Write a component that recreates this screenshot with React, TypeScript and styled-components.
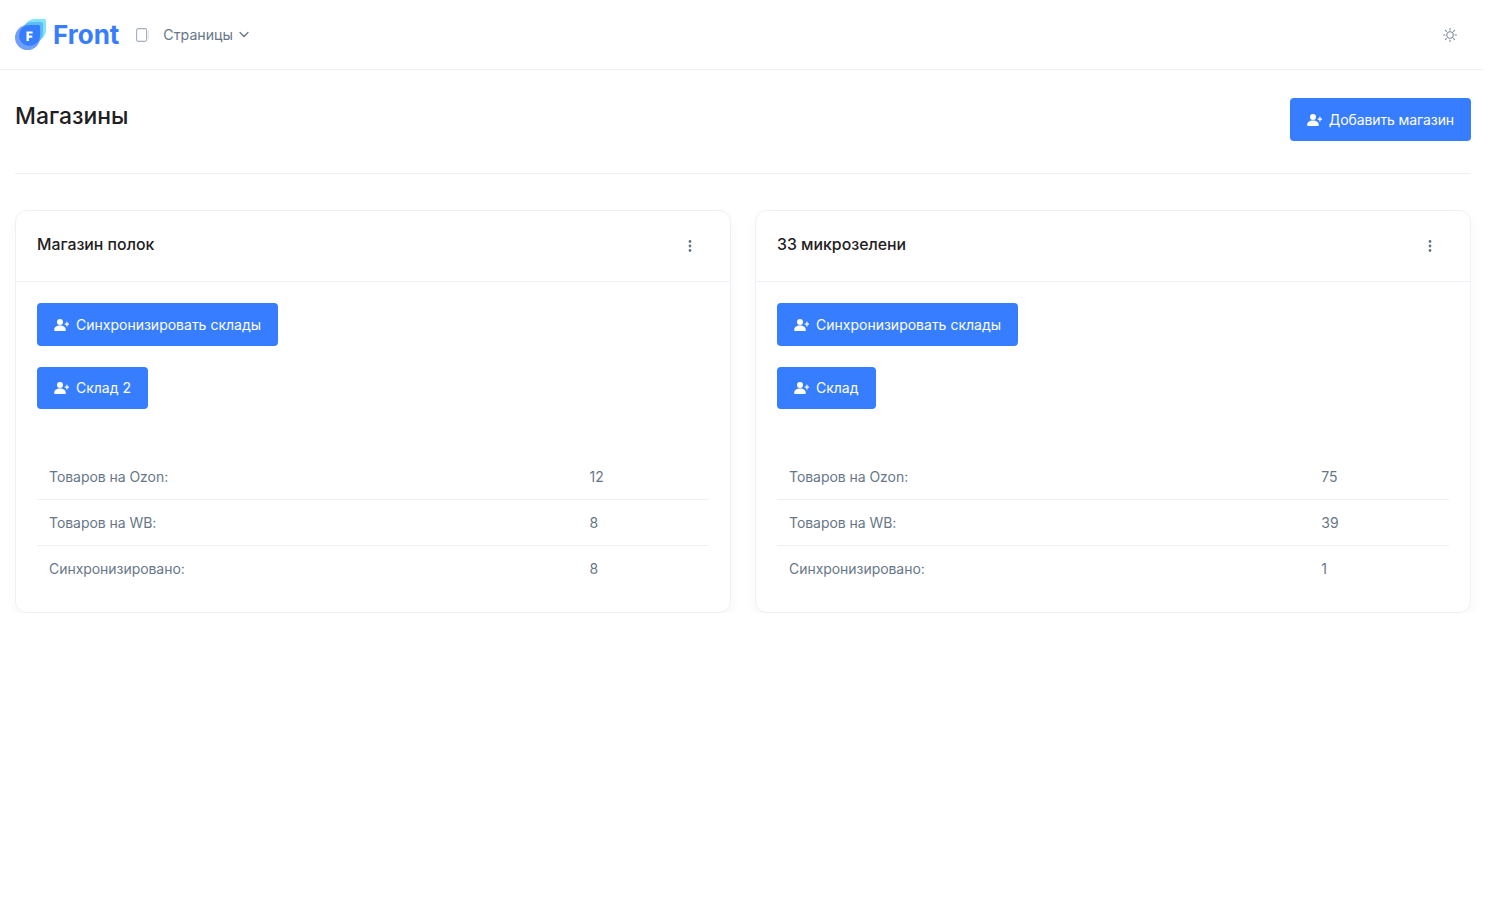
import React from "react";
import styled, { createGlobalStyle } from "styled-components";

const Global = createGlobalStyle`
  html, body { margin: 0; padding: 0; background: #fff; }
  body { font-family: Inter, "Liberation Sans", sans-serif; font-size: 14px; color: #677788; }
  * { box-sizing: border-box; }
`;

const Page = styled.div`
  width: 1483px;
`;
const Header = styled.header`
  height: 70px;
  border-bottom: 1px solid #eef0f5;
  display: flex;
  align-items: center;
  padding: 0 15px;
`;
const Brand = styled.a`
  display: flex;
  align-items: center;
  gap: 6px;
  color: #377dff;
  font-size: 26px;
  font-weight: 700;
`;
const NavIcon = styled.span`
  display: flex;
  margin-left: 17px;
  color: #a5aebd;
`;
const NavLink = styled.a`
  display: flex;
  align-items: center;
  gap: 6px;
  margin-left: 14px;
  font-size: 14.2px;
  color: #677788;
`;
const ThemeButton = styled.span`
  display: flex;
  margin-left: auto;
  margin-right: 11px;
  color: #7f8a9c;
`;
const Main = styled.main`
  padding: 28px 12px 0 15px;
`;
const TitleRow = styled.div`
  display: flex;
  justify-content: space-between;
  align-items: flex-start;
  padding-bottom: 32px;
  border-bottom: 1px solid #eef0f5;
`;
const Title = styled.h1`
  margin: 0;
  font-size: 22.9px;
  line-height: 36px;
  font-weight: 500;
  color: #1e2022;
`;
const PrimaryButton = styled.button<{ $h?: number }>`
  display: inline-flex;
  align-items: center;
  gap: 7px;
  height: ${(p) => p.$h ?? 43}px;
  padding: ${(p) => (p.$h ? "0 17px 1px" : "0 17px")};
  border: 0;
  border-radius: 4px;
  background: #377dff;
  color: #fff;
  font-family: inherit;
  font-size: 14px;
`;
const AddButton = styled(PrimaryButton)`
  letter-spacing: -0.1px;
`;
const Cards = styled.div`
  display: grid;
  grid-template-columns: 716px 716px;
  gap: 24px;
  margin-top: 36px;
`;
const Card = styled.section`
  border: 1px solid #eef0f5;
  border-radius: 12px;
  background: #fff;
  box-shadow: 0 6px 12px rgba(140, 152, 164, 0.075);
`;
const CardHead = styled.div`
  height: 71px;
  border-bottom: 1px solid #eef0f5;
  padding: 0 38px 4px 21px;
  display: flex;
  align-items: center;
  justify-content: space-between;
`;
const CardTitle = styled.h2`
  margin: 0;
  font-size: 15.85px;
  font-weight: 500;
  color: #1e2022;
`;
const MoreIcon = styled.span`
  display: flex;
  color: #677788;
  margin-top: 3px;
`;
const CardBody = styled.div`
  padding: 21px 21px 21px;
`;
const ButtonStack = styled.div`
  display: flex;
  flex-direction: column;
  align-items: flex-start;
  gap: 21px;
  margin-bottom: 44px;
`;
const StatTable = styled.table`
  width: 100%;
  border-collapse: collapse;
`;
const StatRow = styled.tr`
  & + & td { border-top: 1px solid #eef0f5; }
`;
const StatCell = styled.td`
  height: 46px;
  padding: 1px 12px 0;
  font-size: 14px;
  letter-spacing: -0.05px;
  color: #677788;
`;
const ValueCell = styled(StatCell)`
  padding-right: 12.6px;
  letter-spacing: 0;
`;

const UserPlus = () => (
  <svg width="15" height="12" viewBox="0 0 15 12" fill="currentColor">
    <circle cx="6" cy="3" r="3" />
    <path d="M0.200 11c0-2.900 2.300-4.500 5.800-4.500s5.800 1.600 5.800 4.500c0 .6-.4 1-1 1H1.200c-.6 0-1-.4-1-1z" />
    <path d="M12.300 2.800h1.200v1.700H15v1.200h-1.500v1.700h-1.200V5.700h-1.600V4.500h1.600z" />
  </svg>
);

const drop = "M11 0h9a2 2 0 0 1 2 2v9a11 11 0 1 1-22 0 11 11 0 0 1 11-11z";
const Logo = () => (
  <svg width="32" height="32" viewBox="0 0 32 32">
    <path d={drop} transform="translate(9 0)" fill="#7fe3fb" />
    <path d={drop} transform="translate(6 3)" fill="#5dbdfb" />
    <path d={drop} transform="translate(0 6) scale(1.140)" fill="#6f9ff8" />
    <path d={drop} transform="translate(4 6) scale(0.960)" fill="#377dff" />
    <path d="M11.500 12.500h6.200v2.100h-3.800v2h3.400v2.100h-3.400v3.300h-2.400z" fill="#fff" />
  </svg>
);

const PageGlyph = () => (
  <svg width="13" height="14" viewBox="0 0 13 14" fill="none" stroke="currentColor" strokeWidth="1.100">
    <rect x="0.600" y="0.600" width="10" height="12.800" rx="1.600" />
    <path d="M12.300 3v8" stroke="#dfe3ea" />
  </svg>
);

const Chevron = () => (
  <svg width="10" height="7" viewBox="0 0 10 7" fill="none" stroke="currentColor" strokeWidth="1.300" strokeLinecap="round">
    <path d="M1 1.500l4 4 4-4" />
  </svg>
);

const Sun = () => (
  <svg width="14" height="14" viewBox="0 0 14 14" fill="none" stroke="currentColor" strokeWidth="1.100" strokeLinecap="round">
    <circle cx="7" cy="7" r="3.200" />
    <path d="M7 .5v1.500M7 12v1.500M.5 7H2M12 7h1.500M2.400 2.400l1 1M10.600 10.600l1 1M2.400 11.600l1-1M10.600 3.400l1-1" />
  </svg>
);

const Dots = () => (
  <svg width="4" height="12" viewBox="0 0 4 12" fill="currentColor">
    <circle cx="2" cy="1.500" r="1.400" />
    <circle cx="2" cy="6" r="1.400" />
    <circle cx="2" cy="10.500" r="1.400" />
  </svg>
);

const stores = [
  { name: "Магазин полок", wh: "Склад 2", ozon: "12", wb: "8", synced: "8" },
  { name: "33 микрозелени", wh: "Склад", ozon: "75", wb: "39", synced: "1" },
];

export default function App() {
  return (
    <Page>
      <Global />
      <Header>
        <Brand><Logo />Front</Brand>
        <NavIcon><PageGlyph /></NavIcon>
        <NavLink>Страницы <Chevron /></NavLink>
        <ThemeButton><Sun /></ThemeButton>
      </Header>
      <Main>
        <TitleRow>
          <Title>Магазины</Title>
          <AddButton><UserPlus />Добавить магазин</AddButton>
        </TitleRow>
        <Cards>
          {stores.map((s) => (
            <Card key={s.name}>
              <CardHead>
                <CardTitle>{s.name}</CardTitle>
                <MoreIcon><Dots /></MoreIcon>
              </CardHead>
              <CardBody>
                <ButtonStack>
                  <PrimaryButton><UserPlus />Синхронизировать склады</PrimaryButton>
                  <PrimaryButton $h={42}><UserPlus />{s.wh}</PrimaryButton>
                </ButtonStack>
                <StatTable>
                  <tbody>
                    <StatRow><StatCell>Товаров на Ozon:</StatCell><ValueCell>{s.ozon}</ValueCell></StatRow>
                    <StatRow><StatCell>Товаров на WB:</StatCell><ValueCell>{s.wb}</ValueCell></StatRow>
                    <StatRow><StatCell>Синхронизировано:</StatCell><ValueCell>{s.synced}</ValueCell></StatRow>
                  </tbody>
                </StatTable>
              </CardBody>
            </Card>
          ))}
        </Cards>
      </Main>
    </Page>
  );
}
